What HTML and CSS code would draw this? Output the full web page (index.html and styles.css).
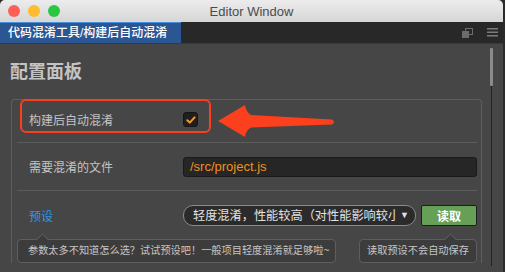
FILE: index.html
```html
<!DOCTYPE html>
<html lang="zh-CN">
<head>
    <meta charset="UTF-8">
    <meta name="viewport" content="width=device-width, initial-scale=1.0">
    <title>Editor Window</title>
    <link rel="stylesheet" href="styles.css">
</head>
<body>

<div class="window">
    <div class="titlebar">
        <div class="lights">
            <span class="light red"></span>
            <span class="light yellow"></span>
            <span class="light green"></span>
        </div>
        <div class="title">Editor Window</div>
    </div>

    <div class="tabbar">
        <div class="tab">代码混淆工具/构建后自动混淆</div>
        <div class="tab-tools">
            <svg width="11" height="10" viewBox="0 0 11 10">
                <rect x="3.5" y="0.5" width="7" height="6" fill="none" stroke="#6c6c6c"/>
                <rect x="0" y="3" width="7" height="7" fill="#6c6c6c"/>
            </svg>
            <svg width="11" height="9" viewBox="0 0 11 9">
                <rect x="0" y="0" width="11" height="1.5" fill="#7a7a7a"/>
                <rect x="0" y="3.5" width="11" height="1.5" fill="#7a7a7a"/>
                <rect x="0" y="7" width="11" height="1.5" fill="#7a7a7a"/>
            </svg>
        </div>
    </div>

    <div class="content">
        <div class="main">
            <h1 class="heading">配置面板</h1>

            <div class="panel">
                <div class="row row-first">
                    <div class="label">构建后自动混淆</div>
                    <div class="field">
                        <span class="checkbox">
                            <svg width="10" height="8" viewBox="0 0 10 8">
                                <path d="M1.3 4.2 L3.8 6.6 L8.6 1.4" fill="none" stroke="#f39a2c" stroke-width="2" stroke-linecap="round" stroke-linejoin="round"/>
                            </svg>
                        </span>
                    </div>
                    <div class="mark"></div>
                </div>

                <div class="row">
                    <div class="label">需要混淆的文件</div>
                    <div class="field">
                        <div class="input">/src/project.js</div>
                    </div>
                </div>

                <div class="row row-last">
                    <div class="label label-link">预设</div>
                    <div class="field">
                        <div class="select">
                            <span class="select-text">轻度混淆，性能较高（对性能影响较小）</span>
                            <span class="select-arrow">▼</span>
                        </div>
                        <button class="btn-read">读取</button>
                    </div>
                </div>

                <div class="tips">
                    <div class="tip tip-left">参数太多不知道怎么选？试试预设吧！一般项目轻度混淆就足够啦~</div>
                    <div class="tip tip-right">读取预设不会自动保存</div>
                </div>
            </div>
        </div>

        <div class="scrollbar">
            <div class="thumb"></div>
            <div class="track"></div>
        </div>
    </div>

    <!-- annotation arrow pointing at the checkbox row -->
    <svg class="arrow" width="124" height="38" viewBox="214 102 124 38">
        <path d="M218 121 L245 105 Q246 112 251 115 L332 119.5 Q336 122 332 124.5 L251 127.5 Q246 130 245 137 Z" fill="#fc3f1c"/>
    </svg>
</div>

</body>
</html>
```

FILE: styles.css
```css
/* Basis */
html, body {
    margin: 0;
    padding: 0;
}

body {
    width: 505px;
    height: 272px;
    overflow: hidden;
    background-color: #2a2a2a;
    font-family: "Liberation Sans", "Noto Sans CJK SC", sans-serif;
}

.window {
    position: relative;
    width: 503px;
    height: 272px;
    background-color: #464646;
    border-radius: 5px 5px 0 0;
    overflow: hidden;
}

/* Titelbalk */
.titlebar {
    position: relative;
    height: 22px;
    background: linear-gradient(#ececec, #d6d6d6);
    display: flex;
    align-items: center;
    justify-content: center;
}

.lights {
    position: absolute;
    left: 8px;
    top: 5px;
    display: flex;
    gap: 8px;
}

.light {
    width: 12px;
    height: 12px;
    border-radius: 50%;
}

.light.red { background-color: #fe5f57; }
.light.yellow { background-color: #febc2e; }
.light.green { background-color: #29c840; }

.title {
    font-size: 13px;
    color: #4b4b4b;
}

/* Tabbalk */
.tabbar {
    height: 21px;
    background-color: #282828;
    border-bottom: 1px solid #3a3a3a;
    display: flex;
    justify-content: space-between;
}

.tab {
    width: 173px;
    padding-left: 8px;
    background-color: #2b5694;
    border-top: 1px solid #4a8fdc;
    color: #ffffff;
    font-size: 12px;
    font-weight: 500;
    line-height: 20px;
    white-space: nowrap;
}

.tab-tools {
    display: flex;
    align-items: center;
    gap: 14px;
    padding-right: 5px;
}

/* Inhoud */
.content {
    display: flex;
    height: 228px;
}

.main {
    flex: 1;
    padding: 16px 0 0 10px;
}

.heading {
    margin: 0;
    font-size: 18px;
    line-height: 24px;
    font-weight: bold;
    color: #c3c3c3;
}

.panel {
    width: 471px;
    margin: 15px 0 0 1px;
    padding: 0 4px 0 5px;
    border: 1px solid #5e5e5e;
    border-bottom: none;
    border-radius: 4px 4px 0 0;
    box-sizing: border-box;
}

.row {
    position: relative;
    display: grid;
    grid-template-columns: 166px minmax(0, 1fr);
    align-items: center;
    height: 48px;
    border-bottom: 1px solid #5c5c5c;
    box-sizing: border-box;
}

.row-first {
    height: 43px;
    padding-bottom: 3px;
}

.row-last {
    border-bottom: none;
}

.label {
    padding-left: 12px;
    font-size: 12px;
    color: #c4c4c4;
}

.label-link {
    color: #2c97ee;
}

.field {
    display: flex;
    align-items: center;
    gap: 5px;
    min-width: 0;
}

/* Checkbox */
.checkbox {
    width: 13px;
    height: 13px;
    background-color: #1f1f1f;
    border: 1px solid #151515;
    border-radius: 3px;
    display: inline-flex;
    align-items: center;
    justify-content: center;
}

/* Rode markering rond de eerste rij */
.mark {
    position: absolute;
    left: 3px;
    top: -1px;
    width: 187px;
    height: 30px;
    border: 2px solid #fb3f1d;
    border-radius: 6px;
}

.arrow {
    position: absolute;
    left: 214px;
    top: 102px;
}

/* Invoerveld */
.input {
    flex: 1;
    height: 18px;
    padding-left: 6px;
    background-color: #262626;
    border: 1px solid #1a1a1a;
    border-radius: 3px;
    color: #f0901f;
    font-size: 13px;
    line-height: 18px;
}

/* Keuzelijst */
.select {
    flex: 1;
    min-width: 0;
    height: 19px;
    display: flex;
    align-items: center;
    padding: 0 6px 0 9px;
    background-color: #2b2b2b;
    border: 1px solid #8a8a8a;
    border-radius: 10px;
    color: #e2e2e2;
}

.select-text {
    flex: 1;
    min-width: 0;
    overflow: hidden;
    white-space: nowrap;
    font-size: 12.2px;
}

.select-arrow {
    font-size: 9px;
    margin-left: 4px;
}

.btn-read {
    flex: none;
    width: 56px;
    height: 21px;
    padding: 0;
    background-color: #66a057;
    border: 1px solid #1e1e1e;
    border-radius: 2px;
    color: #ffffff;
    font-family: inherit;
    font-size: 12px;
    font-weight: bold;
}

/* Tooltips */
.tips {
    display: flex;
    justify-content: space-between;
}

.tip {
    position: relative;
    height: 22px;
    line-height: 22px;
    background-color: #3c3c3c;
    border: 1px solid #5e5e5e;
    border-radius: 4px;
    color: #c6c6c6;
    font-size: 10.2px;
    white-space: nowrap;
}

.tip::before {
    content: "";
    position: absolute;
    top: -5px;
    width: 8px;
    height: 8px;
    background-color: #3c3c3c;
    border-top: 1px solid #5e5e5e;
    border-left: 1px solid #5e5e5e;
    transform: rotate(45deg);
}

.tip-left {
    padding: 0 6px 0 10px;
}

.tip-left::before {
    left: 20px;
}

.tip-right {
    width: 116px;
    text-align: center;
}

.tip-right::before {
    left: 86px;
}

/* Scrollbalk */
.scrollbar {
    width: 16px;
    display: flex;
    flex-direction: column;
    align-items: flex-start;
    padding: 4px 0 0 0;
}

.thumb {
    width: 3px;
    height: 38px;
    margin-left: 3px;
    background-color: #8b8b8b;
    border-radius: 1px;
}

.track {
    width: 1px;
    height: 180px;
    margin-left: 4px;
    background-color: #222222;
}
```
